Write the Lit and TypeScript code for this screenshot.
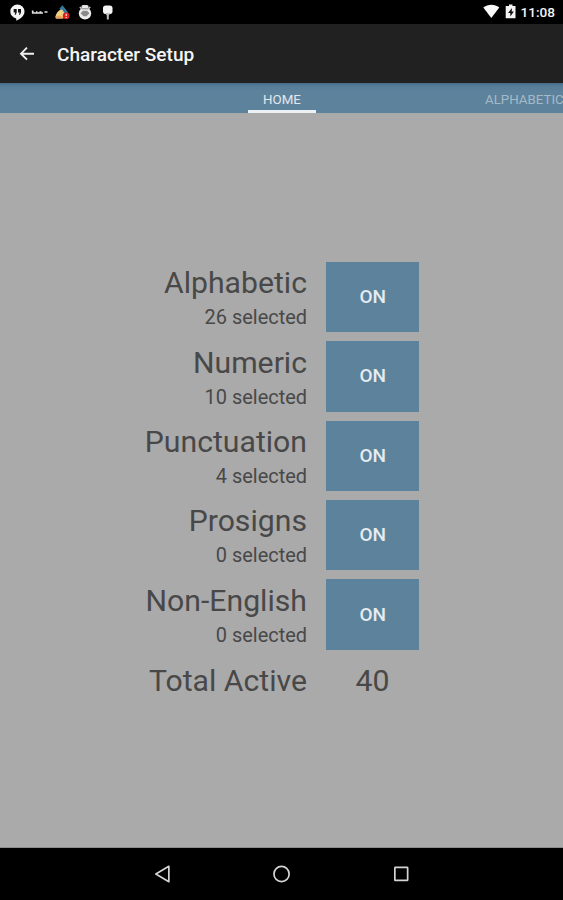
import { LitElement, html, css, svg } from "lit";
import { customElement, property } from "lit/decorators.js";

@customElement("status-bar")
class StatusBar extends LitElement {
  static styles = css`
    :host { display: flex; height: 24px; background: #000; color: #f4f4f4; align-items: center; justify-content: space-between; }
    svg { display: block; }
    .right { display: flex; align-items: center; padding-right: 8px; }
    .time { font: 500 13.600px/24px Roboto, sans-serif; }
  `;
  render() {
    return html`
      <svg width="120" height="24" viewBox="0 0 120 24">
        <path d="M17.300 4.500a7.200 7 0 0 0-1 13.900v2.400c3.800-1.500 8.200-4.700 8.200-9.200A7.200 7.100 0 0 0 17.300 4.500z" fill="#f4f4f4"/>
        <path d="M13.700 9h3v3.400l-1 2.300h-1l.6-2.300h-1.600zM18 9h3v3.400l-1 2.300h-1l.6-2.300H18z" fill="#111"/>
        <path d="M32.700 10.500v3M32 13h11M36 12h1.500M39.500 12h2M44.500 12h3" stroke="#e2e2e2" stroke-width="1.700" fill="none"/>
        <path d="M59.500 8.500l3-3.200 5.500 7v4h-5z" fill="#36789b"/>
        <path d="M55.500 17c.5-4 3-7 6.500-7.500l4.200 6-3 3h-7z" fill="#efd083"/>
        <path d="M55.300 16.500l3.500-1 4 1.500v1.500h-7z" fill="#e9a45c"/>
        <circle cx="66.200" cy="15.800" r="3.400" fill="#d9201f"/>
        <path d="M66.200 13.800v2.300M66.200 17v1" stroke="#fff" stroke-width="1"/>
        <rect x="81.500" y="5" width="7" height="4" rx="1.500" fill="#e2e2e2"/>
        <path d="M79.800 7l2 2M90.200 7l-2 2" stroke="#ccc" stroke-width="1.400"/>
        <circle cx="85" cy="13.300" r="6.200" fill="#ededed"/>
        <path d="M80.500 13.300l2.500-2.600h4l2.500 2.600-3 3h-3z" fill="#8a8a8a"/>
        <path d="M81.500 8.800h7" stroke="#666" stroke-width=".8"/>
        <rect x="103" y="5.500" width="9.500" height="8.500" rx="2.800" fill="#f4f4f4"/>
        <path d="M105 13h5.500l-1.700 2.500v4h-2v-4z" fill="#bdbdbd"/>
      </svg>
      <div class="right">
        <svg width="38" height="24" viewBox="482 0 38 24">
          <path d="M482.300 7.500c5-3.700 11.200-3.700 16 0L490.300 18z" fill="#fafafa"/>
          <path d="M508 4.500h3.500V6h3v12.300h-9.800V6h3.300z" fill="#f4f4f4"/>
          <path d="M511 8l-4 5h2.300v3.500l3.600-5h-2.200z" fill="#111"/>
        </svg>
        <span class="time">11:08</span>
      </div>`;
  }
}

@customElement("title-bar")
class TitleBar extends LitElement {
  static styles = css`
    :host { display: flex; height: 59px; background: #212121; align-items: center; padding-left: 19px; }
    svg { display: block; margin: 1px 21px 0 0; }
    .title { font: 500 19.050px/24px Roboto, sans-serif; color: #f5f5f5; padding-top: 2px; white-space: nowrap; }
  `;
  render() {
    return html`
      <svg width="17" height="16" viewBox="0 0 17 16">
        <path d="M8 1.700L2 7.700l6 6M2 7.700h13" fill="none" stroke="#f0f0f0" stroke-width="1.900"/>
      </svg>
      <span class="title">Character Setup</span>`;
  }
}

@customElement("tab-strip")
class TabStrip extends LitElement {
  static styles = css`
    :host { display: grid; grid-template-columns: 248px 68px 169px 78px; height: 30px; overflow: hidden;
      background: linear-gradient(#466c86, #557c98 3px, #5d829c 9px); font: 400 13.300px/30px Roboto, sans-serif; white-space: nowrap; }
    .tab { grid-column: 2; text-align: center; color: #e2e8ec; box-sizing: border-box; height: 30px; border-bottom: 3px solid #eef1f3; padding-top: 2px; }
    .next { grid-column: 4; color: #a5bac8; padding-top: 2px; }
  `;
  render() {
    return html`<span class="tab">HOME</span><span class="next">ALPHABETIC</span>`;
  }
}

@customElement("group-row")
class GroupRow extends LitElement {
  @property() name = "";
  @property({ type: Number }) count = 0;
  static styles = css`
    :host { display: grid; grid-template-columns: 307px 93.400px; column-gap: 19px; height: 70.400px; font-family: Roboto, sans-serif; color: #484848; }
    .text { text-align: right; white-space: nowrap; }
    .name { font-size: 30.200px; line-height: 36px; padding-top: 3.500px; }
    .count { font-size: 19.950px; line-height: 24px; padding-top: 3.900px; }
    button { border: 0; padding: 0; background: #5d829c; color: #e5ebef; font: 500 19px/70px Roboto, sans-serif; }
  `;
  render() {
    return html`
      <div class="text">
        <div class="name">${this.name}</div>
        <div class="count">${this.count} selected</div>
      </div>
      <button>ON</button>`;
  }
}

@customElement("nav-bar")
class NavBar extends LitElement {
  static styles = css`
    :host { display: flex; height: 52px; background: #000; align-items: center; justify-content: center; gap: 101px; }
    svg { display: block; }
  `;
  icon(shape: unknown) {
    return html`<svg width="18.500" height="18" viewBox="0 0 18 18" fill="none" stroke="#d4d4d4" stroke-width="1.700">${shape}</svg>`;
  }
  render() {
    return html`
      ${this.icon(svg`<path d="M15.600 1.300v15.400L2.600 9z" stroke-linejoin="round"/>`)}
      ${this.icon(svg`<circle cx="9.300" cy="9" r="7.600"/>`)}
      ${this.icon(svg`<rect x="2.600" y="2.400" width="12.800" height="13" rx=".5"/>`)}`;
  }
}

@customElement("app-root")
class AppRoot extends LitElement {
  static styles = css`
    :host { display: flex; flex-direction: column; width: 563px; height: 900px; overflow: hidden; background: #aaa; }
    main { flex: 1; display: flex; flex-direction: column; gap: 9px; padding-top: 148.800px; box-sizing: border-box; border-bottom: 1px solid #8d8d8d; }
    .total { display: grid; grid-template-columns: 307px 93px; column-gap: 19px; font: 400 30.200px/36px Roboto, sans-serif; color: #484848; padding-top: 4px; }
    .label { text-align: right; }
    .value { text-align: center; }
  `;
  groups = [
    { name: "Alphabetic", count: 26 },
    { name: "Numeric", count: 10 },
    { name: "Punctuation", count: 4 },
    { name: "Prosigns", count: 0 },
    { name: "Non-English", count: 0 },
  ];
  render() {
    const total = this.groups.reduce((sum, g) => sum + g.count, 0);
    return html`
      <status-bar></status-bar>
      <title-bar></title-bar>
      <tab-strip></tab-strip>
      <main>
        ${this.groups.map((g) => html`<group-row .name=${g.name} .count=${g.count}></group-row>`)}
        <div class="total"><span class="label">Total Active</span><span class="value">${total}</span></div>
      </main>
      <nav-bar></nav-bar>`;
  }
}
